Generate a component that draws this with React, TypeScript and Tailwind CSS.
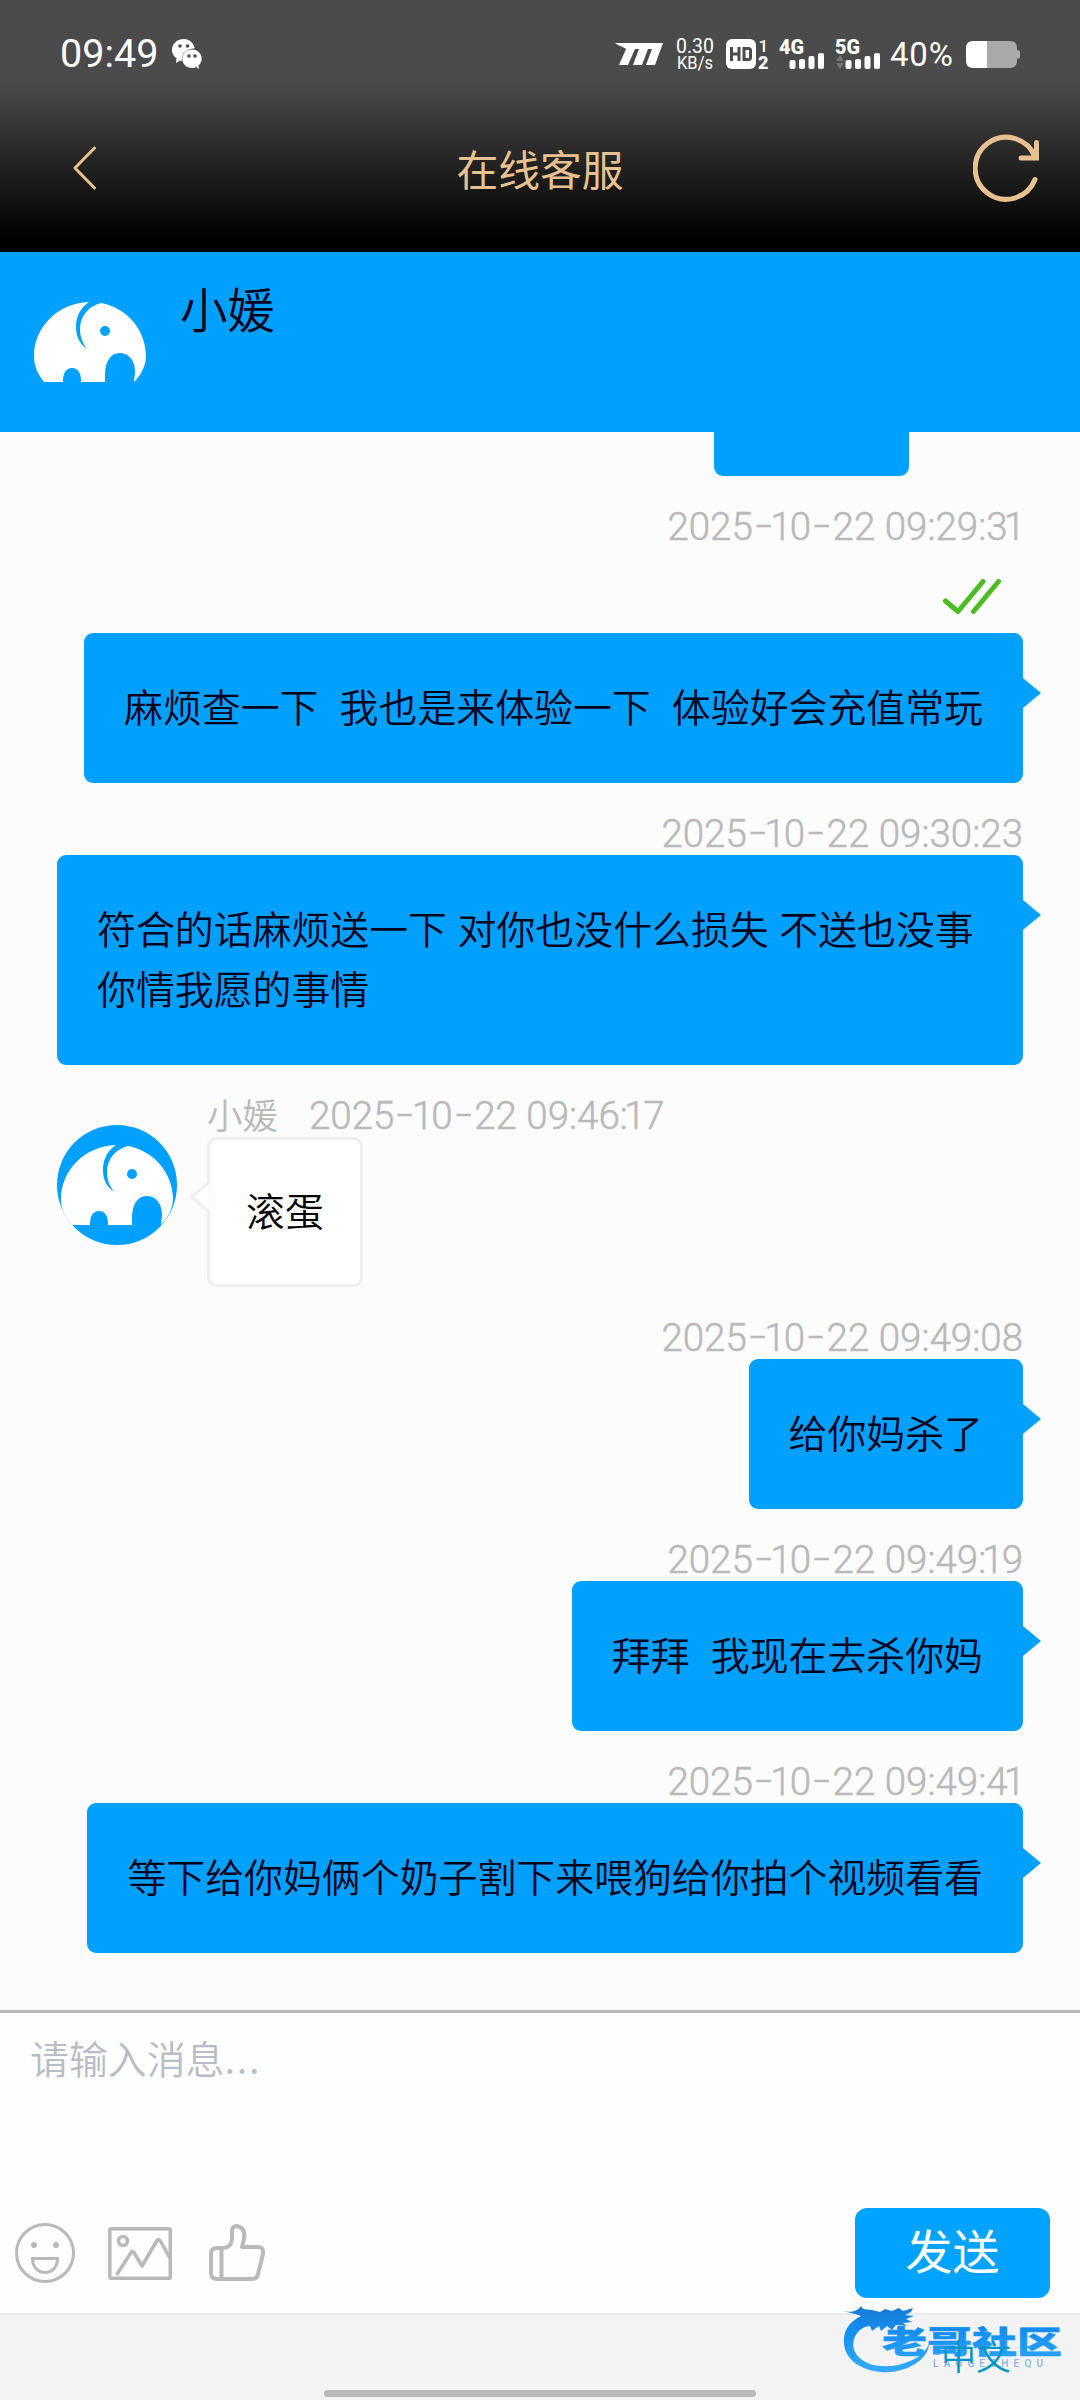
import React from 'react';

interface Message {
  time: string;
  text: string;
  from?: string;
  read?: boolean;
}

const messages: Message[] = [
  { time: '2025-10-22 09:29:31', text: '麻烦查一下  我也是来体验一下  体验好会充值常玩', read: true },
  { time: '2025-10-22 09:30:23', text: '符合的话麻烦送一下 对你也没什么损失 不送也没事你情我愿的事情' },
  { time: '2025-10-22 09:46:17', text: '滚蛋', from: '小媛' },
  { time: '2025-10-22 09:49:08', text: '给你妈杀了' },
  { time: '2025-10-22 09:49:19', text: '拜拜  我现在去杀你妈' },
  { time: '2025-10-22 09:49:41', text: '等下给你妈俩个奶子割下来喂狗给你拍个视频看看' },
];

const Elephant: React.FC<{ className?: string }> = ({ className }) => (
  <svg viewBox="0 0 112 80" className={className} aria-hidden="true">
    <path
      fill="#fff"
      d="M55 0C23 1 0 26 0 54c0 11 4 18 10 26h19V79c0-8 3-13 9-13s9 5 9 13v1h24v-7c0-13 5-22 15-22s15 9 15 19c0 4-1 7-1 10 7-7 12-16 12-27C111 26 92 6 67 1 55 4 46 14 46 27c0 7 2 13 7 20-8-6-11-13-11-22C42 15 46 6 55 0Z"
    />
    <circle cx="71" cy="29" r="5" fill="#00a0ff" />
  </svg>
);

const SignalBars: React.FC<{ label: string; arrows?: boolean }> = ({ label, arrows }) => (
  <svg viewBox="0 0 46 30" className="h-[30px] w-[46px] overflow-visible" fill="#fff">
    <text x="-1" y="15" fontSize="20.500" fontWeight="900" textLength="25" lengthAdjust="spacingAndGlyphs">
      {label}
    </text>
    <rect x="9.500" y="21" width="6" height="9" rx="2" />
    <rect x="19" y="20" width="6" height="10" rx="2" />
    <rect x="28.500" y="17" width="6" height="13" rx="2" />
    <rect x="38" y="14" width="6" height="16" rx="2" />
    {arrows && <path d="M0 22 4 16l4 6ZM0 24h8l-4 6Z" fill="#777" />}
  </svg>
);

const StatusBar = () => (
  <div className="flex h-[108px] items-center pl-[60px] pr-[60px] text-white">
    <span className="w-[112px] font-[Roboto] text-[39.500px] leading-none">09:49</span>
    <svg viewBox="0 0 30 30" className="h-[30px] w-[30px]" fill="#fff">
      <path d="M12 0C5 0 0 4.700 0 11c0 3.500 1.700 6.300 4.500 8.300L4 24l4-2.400 2 .4C9 15 14 10 22.800 9.300 21.500 4 17.500 0 12 0Z" />
      <path d="M20 10.500c-5.600 0-9.700 4-9.700 9.200S14.400 29 20 29c1.500 0 3-.3 4.200-.9l2.800 1.900-.5-3.500c2-1.700 3.200-4 3.200-6.800 0-5.200-4.100-9.200-9.700-9.200Z" />
      <g fill="#4b4b4b">
        <circle cx="8" cy="7" r="1.800" />
        <circle cx="15.500" cy="7" r="1.800" />
        <circle cx="17" cy="17" r="1.800" />
        <circle cx="23" cy="17" r="1.800" />
      </g>
    </svg>
    <div className="ml-auto flex items-center">
      <svg viewBox="0 0 48 22" className="h-[22px] w-12" fill="#fff">
        <path d="M0 0h48l-8 22h-9l6-16h-4l-6 16h-9l6-16h-4l-7 16H4l7-16C9 4 4 3 0 0Z" />
      </svg>
      <svg viewBox="0 0 38 30" className="ml-[13px] h-[30px] w-[38px] overflow-visible font-[Roboto]" fill="#fff">
        <text x="0" y="14" fontSize="19.500" textLength="38" lengthAdjust="spacingAndGlyphs">0.30</text>
        <text x="1" y="30" fontSize="17.500" textLength="36" lengthAdjust="spacingAndGlyphs">KB/s</text>
      </svg>
      <svg viewBox="0 0 43 30" className="ml-3 h-[30px] w-[43px] overflow-visible font-[Roboto]" fill="#fff">
        <rect width="30" height="30" rx="6" />
        <path d="M5.500 8v14M13 8v14M5.500 15H13M18 9.500h4.500q2 0 2 2v7q0 2-2 2H18Z" fill="none" stroke="#4b4b4b" strokeWidth="3" />
        <text x="32.500" y="12.500" fontSize="17" fontWeight="500">1</text>
        <text x="32" y="30" fontSize="18" fontWeight="900">2</text>
      </svg>
      <div className="ml-[11px] flex gap-2.5 font-[Roboto]">
        <SignalBars label="4G" />
        <SignalBars label="5G" arrows />
      </div>
      <span className="ml-[8px] w-[76px] whitespace-nowrap font-[Roboto] text-[33px] leading-none tracking-[0.8px]">40%</span>
      <svg viewBox="0 0 54 27" className="h-[27px] w-[54px]">
        <path d="M21 0h23q7 0 7 7v2l3 1v7l-3 1v2q0 7-7 7H21Z" fill="#a9a9a9" />
        <path d="M7 0h14v27H7q-7 0-7-7V7q0-7 7-7Z" fill="#fff" />
      </svg>
    </div>
  </div>
);

const NavBar = () => (
  <div className="flex h-36 items-start justify-between pl-[73px] pr-[41px] text-[#e8c190]">
    <svg viewBox="0 0 24 44" className="mt-[38px] h-11 w-6" fill="none" stroke="currentColor" strokeWidth="3" strokeLinecap="round" strokeLinejoin="round">
      <path d="M21.500 2 2 22l19.500 20" />
    </svg>
    <h1 className="ml-[10px] mt-[30px] text-[41.800px] leading-[60px]">在线客服</h1>
    <svg viewBox="0 0 66 68" className="mt-[26px] h-[68px] w-[66px]" fill="none" stroke="currentColor" strokeWidth="5" strokeLinecap="round">
      <path d="M62 45.500A31 31 0 1 1 62 23" />
      <path d="M63.500 8.500V24H48" />
    </svg>
  </div>
);

// Hyphens are drawn wider and ones narrower than Roboto's own.
const Timestamp: React.FC<{ value: string }> = ({ value }) => (
  <span className="inline-flex translate-y-px whitespace-pre font-[Roboto] text-[38.500px] font-light [-webkit-text-stroke:0.500px_#b9b9b9]">
    {value.split('').map((char, i) => {
      if (char === '-') {
        return <span key={i} className="w-[21.500px] -translate-y-0.5 scale-x-150 text-center">-</span>;
      }
      return <span key={i} className={char === '1' ? '-ml-[4px] -mr-[2px]' : undefined}>{char}</span>;
    })}
  </span>
);

const ReadMark = () => (
  <div className="flex h-[85px] justify-end pr-[22px] pt-[31px]">
    <svg viewBox="0 0 58 36" className="h-9 w-[58px]" fill="none" stroke="#4dbb23" strokeWidth="5" strokeLinecap="round" strokeLinejoin="round">
      <path d="M2.500 22 15 32.500 40 2.500M30.500 32.500 55.500 2.500" />
    </svg>
  </div>
);

const MessageRow: React.FC<{ message: Message }> = ({ message }) => {
  if (message.from) {
    return (
      <div className="flex">
        <div className="mt-[60px] flex h-[120px] w-[120px] items-center justify-center overflow-hidden rounded-full bg-[#00a0ff]">
          <Elephant className="h-20 w-28" />
        </div>
        <div className="ml-[30px] flex flex-col items-start">
          <div className="flex h-[72px] items-end whitespace-nowrap leading-[44px] text-[#b9b9b9]">
            <span className="w-[102px] -translate-y-px text-[35.500px] font-[350]">{message.from}</span>
            <Timestamp value={message.time} />
          </div>
          <div className="relative rounded-[9px] border-[3px] border-[#efefef] bg-white px-[36px] pb-[45px] pt-[39px] text-[38.900px] font-[350] leading-[60px]">
            {message.text}
            <svg viewBox="0 0 21 34" className="absolute -left-[22px] top-[40px] h-[34px] w-[22px]">
              <path d="M21 2 3 17l18 15" fill="#fff" stroke="#efefef" strokeWidth="3" />
            </svg>
          </div>
        </div>
      </div>
    );
  }

  return (
    <div className="flex flex-col items-end">
      <div className="flex h-[72px] items-end leading-[44px] text-[#b9b9b9]">
        <Timestamp value={message.time} />
      </div>
      {message.read && (
        <div className="self-stretch">
          <ReadMark />
        </div>
      )}
      <div className="relative max-w-[966px] whitespace-pre-wrap rounded-[9px] bg-[#00a0ff] px-10 pb-12 pt-[42px] text-[38.900px] font-[350] leading-[60px] text-[#00001a] [word-spacing:1.900px]">
        {message.text}
        <svg viewBox="0 0 18 30" className="absolute -right-[18px] top-[45px] h-[30px] w-[18px]">
          <path d="M0 0l18 15L0 30Z" fill="#00a0ff" />
        </svg>
      </div>
    </div>
  );
};

const Composer = () => (
  <div className="flex h-[303px] flex-col justify-between border-t-[3px] border-[#b9b9b9] bg-[#fefefe]">
    <p className="pl-[30px] pt-[14px] text-[38.900px] font-[350] leading-[60px] text-[#b8bcc4]">
      请输入消息<span className="tracking-[1.800px]">...</span>
    </p>
    <div className="mb-[15px] flex items-center pl-[15px] pr-[30px]">
      <div className="flex items-center text-[#b9b9b9]">
        <svg viewBox="0 0 60 60" className="h-[60px] w-[60px]" fill="none" stroke="currentColor" strokeWidth="3">
          <circle cx="30" cy="30" r="28.500" />
          <circle cx="19" cy="22" r="3" fill="currentColor" stroke="none" />
          <circle cx="41" cy="22" r="3" fill="currentColor" stroke="none" />
          <path d="M17.500 35.500h25c0 8-5 14-12.500 14s-12.500-6-12.500-14Z" />
        </svg>
        <svg viewBox="0 0 64 53" className="ml-[33px] h-[53px] w-16" fill="none" stroke="currentColor" strokeWidth="3.500" strokeLinejoin="round">
          <rect x="1.800" y="1.800" width="60.500" height="49.500" rx="1" />
          <circle cx="15" cy="14" r="4.500" />
          <path d="M8.500 48 23 25.500q1.500-2 3 0L34 39 49 13.500q1.500-2 3 0L62.500 32" />
        </svg>
        <svg viewBox="0 0 56 58" className="ml-[37px] h-[58px] w-14" fill="none" stroke="currentColor" strokeWidth="4" strokeLinejoin="round">
          <path d="M14 24q8 0 9-9V7q0-5 5-5 9 2 7 13l-2 8h16q6 0 5 7l-5 20q-1 5-6 5H8q-6 0-6-6V30q0-6 6-6ZM12.500 24v31" />
        </svg>
      </div>
      <button type="button" className="ml-auto h-[90px] w-[195px] rounded-xl bg-[#00a3ff] text-[47px] leading-[84px] text-white">
        <span className="block -translate-y-1">发送</span>
      </button>
    </div>
  </div>
);

const CommunityLogo = () => (
  <svg viewBox="0 0 222 72" className="absolute -top-[11px] right-[16px] h-[72px] w-[222px]">
    <defs>
      <linearGradient id="logo" x1="0" y1="0" x2="0" y2="72" gradientUnits="userSpaceOnUse">
        <stop offset="0" stopColor="#1577d0" />
        <stop offset="0.4" stopColor="#1590f0" />
        <stop offset="1" stopColor="#38adfb" />
      </linearGradient>
    </defs>
    <g fill="url(#logo)">
      <path d="M0 7c9 2 16 0 19-5l2 3 9 1 8 2 5-3 7 2 7-3 4 3 10-3-2 4-6 3 9 1-8 3 6 3-9 1 4 3-11-1-4 5-5-4-6 5-2-5-7 5-2-5C15 23 8 37 13 48c8 16 36 18 55 9 10-4 16-10 19-17-1 17-25 30-48 28C16 66 0 53 2 34 3 24 9 17 19 12 14 10 10 9 0 7Z" />
      <text x="40" y="49" fontSize="31" fontWeight="900" stroke="url(#logo)" strokeWidth="0.500" textLength="180" lengthAdjust="spacingAndGlyphs">老哥社区</text>
    </g>
    <text x="91" y="62.500" fontSize="10" fontWeight="500" fill="#8fb4dd" textLength="110" className="font-[Roboto]">LAOGESHEQU</text>
  </svg>
);

const App: React.FC = () => {
  return (
    <div className="flex h-[2400px] w-[1080px] flex-col overflow-hidden bg-[#fcfcfc] font-['Noto_Sans_CJK_SC',sans-serif]">
      <header className="h-[252px] bg-[linear-gradient(to_bottom,#4b4b4b_0,#4b4b4b_82px,#202020_170px,#000_240px)]">
        <StatusBar />
        <NavBar />
      </header>

      <div className="flex h-[180px] bg-[#00a0ff] pl-[34px] pt-[50px]">
        <Elephant className="h-20 w-28" />
        <h2 className="-mt-[29px] ml-[34px] text-[47.500px] font-[350] leading-[70px] text-[#00001a]">小媛</h2>
      </div>

      <main className="flex flex-1 flex-col overflow-hidden pl-[57px] pr-[57px]">
        <div className="mr-[114px] h-11 w-[195px] shrink-0 self-end rounded-b-[9px] bg-[#00a0ff]" />
        {messages.map((message) => (
          <MessageRow key={message.time} message={message} />
        ))}
      </main>

      <Composer />

      <footer className="relative flex h-[87px] flex-col items-center justify-end border-t-2 border-[#e8e8e8] bg-[#f3f3f3] pb-[3px]">
        <CommunityLogo />
        <span className="relative mb-[10px] mr-[69px] self-end text-[35px] font-[350] leading-[50px] text-[#0095c8]">中文</span>
        <div className="h-[7px] w-[432px] rounded-full bg-[#b9b9b9]" />
      </footer>
    </div>
  );
};

export default App;
